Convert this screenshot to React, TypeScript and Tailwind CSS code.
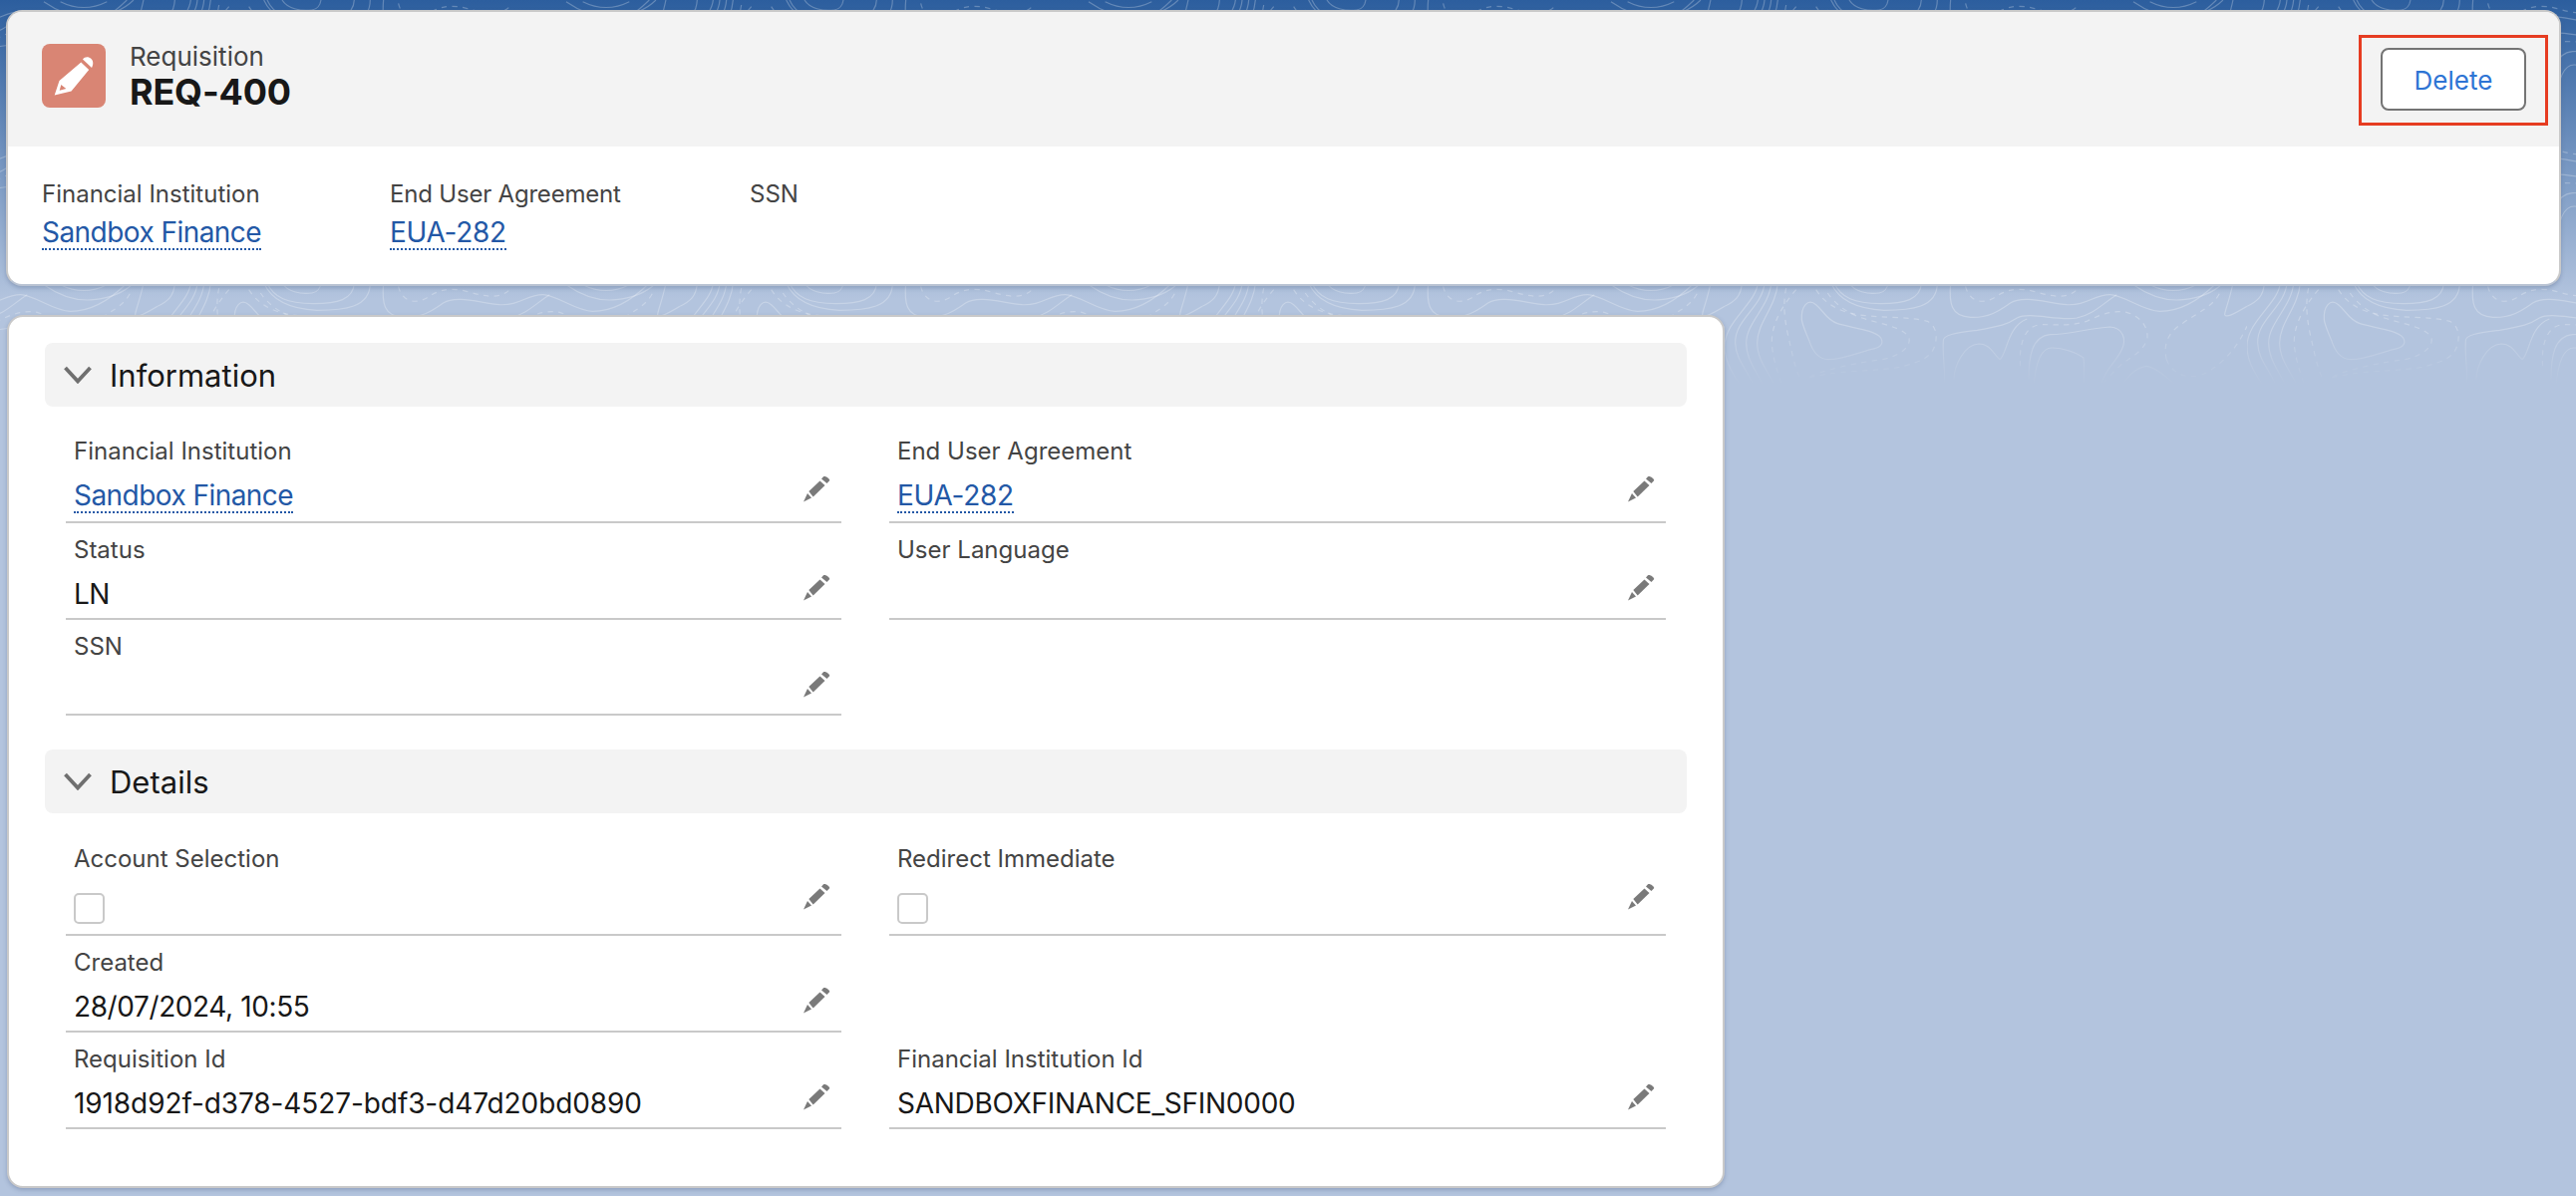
import React from "react";

const FONT = "font-['Inter','Liberation_Sans',sans-serif]";

function TopoLines() {
  const s = { fill: "none", stroke: "#ffffff", strokeWidth: 3.6, strokeOpacity: 0.26 };
  const d = { ...s, strokeDasharray: "16 16" };
  return (
    <g>
      <path {...s} d="M232 110C230 70 250 45 275 65C300 85 305 110 340 122C380 135 450 140 470 165C482 185 465 195 440 200C400 210 350 232 310 230C280 228 265 205 255 175C245 150 235 130 232 110Z" />
      <path {...d} d="M275 20C300 60 340 85 400 95C460 105 560 100 610 115C640 130 640 165 632 190C620 225 590 235 540 250C470 268 320 260 240 290" />
      <path {...d} d="M310 30C330 60 370 95 430 110C480 125 540 135 555 165C562 195 520 225 460 232C400 240 300 260 250 285" />
      <path {...s} d="M330 0C350 45 390 60 470 62C540 62 590 50 592 0" />
      <path {...s} d="M375 0C390 25 430 35 465 30C480 28 490 15 492 0" />
      <path {...s} d="M320 0C345 55 400 78 480 82C560 82 640 75 640 0" />
      <path {...s} d="M0 70C30 55 50 40 52 0" />
      <path {...s} d="M100 0C95 60 0 115 0 190C0 250 40 290 60 330" />
      <path {...s} d="M120 0C115 70 30 110 32 180C34 240 80 270 95 330" />
      <path {...s} d="M140 0C135 70 65 120 65 180C65 240 110 280 125 330" />
      <path {...s} d="M160 0C155 70 98 120 98 180C98 240 145 280 160 330" />
      <path {...d} d="M215 20C180 60 140 120 142 180C145 240 170 290 178 330" />
      <path {...d} d="M185 15C170 90 190 150 205 220C215 260 225 290 235 295" />
      <path {...s} d="M680 0C675 60 680 100 740 103C800 105 830 80 860 60C900 35 970 60 1030 65C1090 68 1110 35 1160 35C1200 35 1260 85 1310 85C1360 85 1420 60 1480 0" />
      <path {...d} d="M725 10C735 55 775 65 810 45C840 25 870 10 930 25C980 40 1030 50 1060 20" />
      <path {...s} d="M1230 5C1280 40 1330 55 1380 50C1430 45 1470 30 1500 0" />
      <path {...s} d="M1280 5C1320 25 1370 30 1420 5" />
      <path {...s} d="M662 330C665 260 655 220 658 175C655 155 700 150 760 142C830 130 850 125 880 105C920 85 1000 115 1060 105C1110 95 1140 60 1180 35" />
      <path {...s} d="M690 290C690 250 720 185 765 183C800 183 810 215 828 230C850 215 850 130 910 108" />
      <path {...d} d="M890 250C885 190 900 130 950 125C1000 125 1040 130 1090 115C1130 95 1170 80 1210 88C1250 100 1275 130 1272 165C1265 200 1230 220 1200 240C1170 265 1130 310 1120 330" />
      <path {...s} d="M915 290C915 220 925 160 980 155C1040 155 1100 135 1160 132C1200 135 1210 170 1195 200C1180 235 1145 260 1135 300" />
      <path {...s} d="M930 310C935 250 950 195 985 195C1020 195 1060 210 1080 225C1085 260 1080 290 1080 320" />
      <path {...s} d="M1190 320C1210 280 1240 255 1270 250C1300 255 1340 290 1370 320" />
      <path {...d} d="M1330 230C1320 190 1330 150 1380 120C1430 85 1470 70 1490 30" />
      <path {...d} d="M1330 230C1345 275 1400 295 1450 270C1500 240 1540 200 1572 130" />
      <path {...s} d="M1530 0C1520 50 1505 85 1505 95C1510 105 1530 95 1572 70" />
    </g>
  );
}

function Texture() {
  return (
    <svg className="absolute top-0 left-0 w-full h-[400px] pointer-events-none" width="2584" height="400" aria-hidden="true">
      <defs>
        <linearGradient id="fade" x1="0" y1="0" x2="0" y2="1">
          <stop offset="0" stopColor="#fff" />
          <stop offset="0.82" stopColor="#fff" />
          <stop offset="0.97" stopColor="#000" />
        </linearGradient>
        <mask id="fadeMask" maskUnits="userSpaceOnUse" x="0" y="0" width="2584" height="400">
          <rect x="0" y="0" width="2584" height="400" fill="url(#fade)" />
        </mask>
        <pattern id="topo" patternUnits="userSpaceOnUse" x="158" y="0" width="524" height="400">
          <g transform="translate(0,0) scale(0.3333)"><TopoLines /></g>
          <g transform="translate(0,142) scale(0.3333)"><TopoLines /></g>
          <g transform="translate(0,284) scale(0.3333)"><TopoLines /></g>
        </pattern>
      </defs>
      <rect x="0" y="0" width="2584" height="400" fill="url(#topo)" mask="url(#fadeMask)" />
    </svg>
  );
}

function Pencil() {
  return (
    <svg width="28" height="28" viewBox="0 0 28 28" className="shrink-0 mt-[51px] mr-[11px]" aria-hidden="true">
      <path fill="#7a7a7a" d="M6.3 16L17.5 5.5L22.5 10L10.7 21.5Z" />
      <path fill="#7a7a7a" d="M5 18L9 22.5L1 26.5Z" />
      <path fill="#7a7a7a" d="M19 3.5L21 1.2C23 0 27 3 27.3 5L24.5 8Z" />
    </svg>
  );
}

function HeroIcon() {
  return (
    <div className="w-16 h-16 rounded-lg bg-[#d98574] shrink-0">
      <svg width="64" height="64" viewBox="0 0 64 64" aria-hidden="true">
        <path fill="#fff" fillRule="evenodd" d="M39.3 18.5L47.2 26L29.5 47.5L12.7 51.5L17.5 37ZM19.3 41L17.7 46.7L24.3 45Z" />
        <path fill="#fff" d="M41 15.5C43 12.5 47 12.5 49.5 15C52 17.5 51.5 21 50 24Z" />
      </svg>
    </div>
  );
}

type FieldProps = { label: string; h: string; children?: React.ReactNode };

function Field({ label, h, children }: FieldProps) {
  return (
    <div className={`flex items-start justify-between border-b-2 border-[#c9c9c9] pl-[8px] ${h}`}>
      <div className="flex flex-col">
        <div className="text-[24px] leading-[32px] mt-[11px] text-[#444444]">{label}</div>
        <div className="mt-[10px] min-h-[36px] text-[28px] leading-[36px] text-[#181818]">{children}</div>
      </div>
      <Pencil />
    </div>
  );
}

function LinkValue({ tracking, children }: { tracking: string; children: React.ReactNode }) {
  return (
    <a className={`inline-block pt-[2px] leading-[32px] text-[#2358a6] border-b-2 border-dotted border-[#2358a6] ${tracking}`}>{children}</a>
  );
}

function Checkbox() {
  return <div className="w-[31px] h-[31px] mt-[8px] rounded-[5px] border-2 border-[#c9c9c9] bg-white" />;
}

function SectionBar({ title }: { title: string }) {
  return (
    <div className="flex items-center h-16 rounded-[8px] bg-[#f3f3f3] pl-[19px]">
      <svg width="28" height="18" viewBox="0 0 28 18" aria-hidden="true">
        <path d="M1.5 2L14 15.5L26.5 2" fill="none" stroke="#6f6f6f" strokeWidth="3.8" />
      </svg>
      <span className="ml-[18px] pt-[2px] text-[31px] leading-[40px] text-[#181818]">{title}</span>
    </div>
  );
}

export default function App() {
  return (
    <div className={`relative w-[2584px] h-[1200px] overflow-hidden bg-[linear-gradient(180deg,#2c5e9e_0px,#b3c4de_300px)] ${FONT}`}>
      <Texture />
      <div className="relative flex flex-col items-start pl-[6px] pt-[10px]">
        {/* Highlights card */}
        <div className="w-[2563px] h-[277px] rounded-[16px] border-2 border-[#c9c9c9] border-b-[#b9c3d3] bg-white overflow-hidden shadow-[0_2px_4px_rgba(60,80,120,0.3)]">
          <div className="flex justify-between h-[135px] bg-[#f3f3f3] pl-[34px] pr-[11px]">
            <div className="flex mt-[32px] gap-[24px]">
              <HeroIcon />
              <div className="flex flex-col -mt-[2px]">
                <div className="text-[26px] leading-[30px] text-[#444444]">Requisition</div>
                <div className="text-[36px] leading-[40px] font-bold tracking-[-0.2px] text-[#181818]">REQ-400</div>
              </div>
            </div>
            <div className="flex items-center justify-center w-[190px] h-[91px] mt-[23px] pb-[2px] border-[3px] border-[#e63c21]">
              <button className="w-[146px] h-[63px] pt-[2px] rounded-[8px] border-2 border-[#747474] bg-white text-[26px] text-[#2e74d4]">
                Delete
              </button>
            </div>
          </div>
          <div className="flex pl-[34px] pt-[32px]">
            <div className="w-[349px]">
              <div className="text-[24px] leading-[32px] text-[#444444]">Financial Institution</div>
              <div className="mt-[4px] text-[28px] leading-[36px]"><LinkValue tracking="tracking-[-0.55px]">Sandbox Finance</LinkValue></div>
            </div>
            <div className="w-[361px]">
              <div className="text-[24px] leading-[32px] tracking-[-0.2px] text-[#444444]">End User Agreement</div>
              <div className="mt-[4px] text-[28px] leading-[36px]"><LinkValue tracking="tracking-[-0.3px]">EUA-282</LinkValue></div>
            </div>
            <div>
              <div className="text-[24px] leading-[32px] text-[#444444]">SSN</div>
            </div>
          </div>
        </div>

        {/* Detail card */}
        <div className="ml-[1px] mt-[29px] w-[1723px] h-[876px] rounded-[16px] border-2 border-[#c9c9c9] bg-white px-[36px] pt-[26px] shadow-[0_2px_4px_rgba(60,80,120,0.3)]">
          <SectionBar title="Information" />
          <div className="mt-[18px] ml-[21px] grid w-[1605px] grid-cols-[778px_779px] gap-x-[48px]">
            <Field label="Financial Institution" h="h-[99px]"><LinkValue tracking="tracking-[-0.55px]">Sandbox Finance</LinkValue></Field>
            <Field label="End User Agreement" h="h-[99px]"><LinkValue tracking="tracking-[-0.3px]">EUA-282</LinkValue></Field>
            <Field label="Status" h="h-[97px]"><span className="tracking-[-0.5px]">LN</span></Field>
            <Field label="User Language" h="h-[97px]" />
            <Field label="SSN" h="h-[96px]" />
          </div>
          <div className="mt-[34px]">
            <SectionBar title="Details" />
          </div>
          <div className="mt-[19px] ml-[21px] grid w-[1605px] grid-cols-[778px_779px] gap-x-[48px]">
            <Field label="Account Selection" h="h-[104px]"><Checkbox /></Field>
            <Field label="Redirect Immediate" h="h-[104px]"><Checkbox /></Field>
            <Field label="Created" h="h-[97px]"><span className="tracking-[-0.4px]">28/07/2024, 10:55</span></Field>
            <div />
            <Field label="Requisition Id" h="h-[97px]"><span className="tracking-[-0.09px]">1918d92f-d378-4527-bdf3-d47d20bd0890</span></Field>
            <Field label="Financial Institution Id" h="h-[97px]"><span className="tracking-[-0.28px]">SANDBOXFINANCE_SFIN0000</span></Field>
          </div>
        </div>
      </div>
    </div>
  );
}
